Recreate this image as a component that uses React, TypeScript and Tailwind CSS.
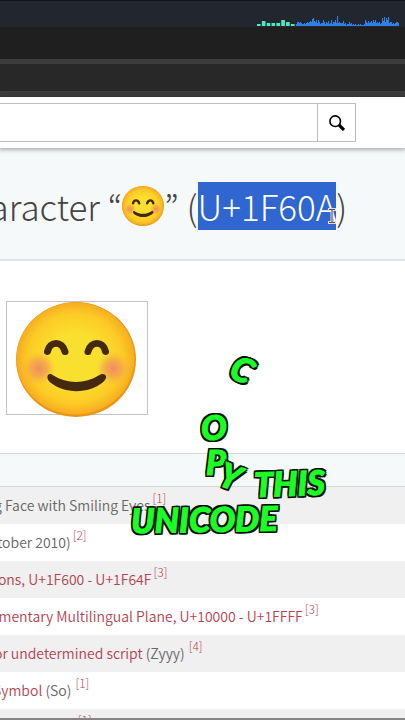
import { useId } from "react";

const levels = [
  2, 4, 4, 3, 4, 3, 2, 2, 3, 2, 3, 4, 3, 4, 5, 4, 7, 8, 5, 4, 6, 3, 6, 4, 2, 3, 3, 6, 4, 2, 4, 3, 5, 2, 3,
  6, 2, 4, 4, 6, 3, 10, 3, 4, 3, 3, 3, 5, 2, 3, 1, 2, 2, 4, 2, 3, 1, 2, 1, 2, 1, 1, 2, 1, 2, 1, 1, 1, 2, 6,
  4, 3, 5, 3, 4, 5, 3, 6, 4, 6, 3, 4, 3, 4, 2, 3, 8, 5, 9, 4, 8, 6, 9, 3, 4, 4, 2, 3, 2, 3, 4, 4, 3,
];
const beats = [2, 5, 3, 3, 3, 6, 4, 2];

function Meter() {
  return (
    <svg className="mr-1.5 h-3 w-[142px]" viewBox="0 0 142 12" aria-hidden="true">
      {beats.map((h, i) => (
        <rect key={i} x={i * 4.85} y={11 - h} width="3.6" height={h} fill="#4cebc4" />
      ))}
      {levels.map((h, i) => (
        <rect key={i} x={39 + i} y={11 - h} width="1.1" height={h} fill="#2f7fe6" />
      ))}
    </svg>
  );
}

function Face({ className }: { className: string }) {
  const id = useId();
  return (
    <svg className={className} viewBox="0 0 120 116" preserveAspectRatio="none" role="img" aria-label="Smiling face with smiling eyes">
      <defs>
        <radialGradient id={id + "f"} cx="0.5" cy="0.5" r="0.5">
          <stop offset="0.45" stopColor="#fae02e" />
          <stop offset="0.8" stopColor="#fccb26" />
          <stop offset="1" stopColor="#f6ad20" />
        </radialGradient>
        <radialGradient id={id + "c"}>
          <stop offset="0" stopColor="#f08b62" />
          <stop offset="0.5" stopColor="#f39b56" stopOpacity="0.7" />
          <stop offset="1" stopColor="#f8b53c" stopOpacity="0" />
        </radialGradient>
      </defs>
      <ellipse cx="60" cy="58" rx="60" ry="58" fill="#ee9414" />
      <ellipse cx="59.5" cy="57" rx="59" ry="56.5" fill={`url(#${id}f)`} />
      <circle cx="23" cy="67" r="17" fill={`url(#${id}c)`} />
      <circle cx="97" cy="67" r="17" fill={`url(#${id}c)`} />
      <g fill="none" stroke="#44290f" strokeLinecap="round" strokeLinejoin="round">
        <path d="M31.500 50 C34 39 46 39 49 50" strokeWidth="7" />
        <path d="M72 50 C75 39 87 39 89.500 50" strokeWidth="7" />
      </g>
      <path
        d="M31.500 75 C32 72 35 72 37 74 C51 83 69 83 83 74 C86 72 89 72 90 75 C90.500 77 89 79 87 81 C72 93 49 93 34 81 C32 79 31 77 31.500 75Z"
        fill="#44290f"
      />
    </svg>
  );
}

function Ref({ n, spaced }: { n: number; spaced?: boolean }) {
  return (
    <sup className={`relative -top-2 align-baseline text-xs font-light text-[#b5434f] ${spaced ? "ml-1" : "ml-0.5"}`}>
      <a href="#sources">[{n}]</a>
    </sup>
  );
}

const rows = [
  { text: "Smiling Face with Smiling Eyes", n: 1 },
  { text: "6.0 (October 2010)", n: 2 },
  { link: "Emoticons, U+1F600 - U+1F64F", n: 3 },
  { link: "Supplementary Multilingual Plane, U+10000 - U+1FFFF", n: 3 },
  { link: "Code for undetermined script", text: " (Zyyy)", n: 4, spaced: true },
  { link: "Other Symbol", text: " (So)", n: 1, spaced: true },
  { link: "Other Neutral", text: " (ON)", n: 1, spaced: true },
];

const glyph =
  "absolute leading-none text-[#1bff27] [-webkit-text-stroke:1px_#1bff27] [text-shadow:2px_0_#061006,-2px_0_#061006,0_2px_#061006,0_-2px_#061006,2px_2px_#061006,-2px_2px_#061006,2px_-2px_#061006,-2px_-2px_#061006]";

export default function App() {
  return (
    <div className="relative h-screen overflow-hidden bg-white font-['Noto_Sans_CJK_KR','Noto_Sans',sans-serif] font-light">
      <header>
        <div className="flex h-[27px] items-end justify-end border-t border-[#11141a] bg-[#22262e]">
          <Meter />
        </div>
        <div className="h-8 bg-[#1f1f1f]" />
        <div className="h-[38px] border-t-[5px] border-b-[6px] border-[#3c3c3c] bg-[#282828]" />
      </header>

      <form
        className="relative flex h-[51px] items-center bg-white pr-[49px] shadow-[0_1px_4px_1px_rgba(0,0,0,0.3)]"
        onSubmit={(e) => e.preventDefault()}
      >
        <input
          aria-label="Search"
          className="h-[39px] min-w-0 flex-1 border-y border-[#bdbdbd] bg-white px-3 outline-none"
        />
        <button aria-label="Submit search" className="flex size-[39px] items-center justify-center border border-[#bdbdbd]">
          <svg className="size-4" viewBox="0 0 16 16" fill="none" stroke="#000">
            <circle cx="6.200" cy="6.200" r="5.300" strokeWidth="1.600" />
            <path d="M10.200 10.200 L15 15" strokeWidth="3.200" />
          </svg>
        </button>
      </form>

      <section className="flex h-[113px] items-center border-b-2 border-[#e1e3e4] bg-[#f6f9fa] pt-1">
        <h1 className="-ml-[31px] flex items-center text-[35px] leading-[48px] whitespace-pre text-[#444]">
          {"haracter “"}
          <Face className="h-10 w-[42px]" />
          {"” ("}
          <mark className="bg-[#2f66d0] text-white">U+1F60A</mark>)
        </h1>
      </section>

      <section className="h-[192px] pt-10 pl-1.5">
        <div className="flex h-[114px] w-[142px] justify-center border border-[#c4c4c4]">
          <Face className="-ml-0.5 h-[115px] w-[120px] shrink-0" />
        </div>
      </section>

      <div className="h-[34px] border-y border-[#d3d8da] bg-[#f6f9fa]" />
      <table className="w-full border-collapse text-sm leading-5 font-[350] text-[#666]">
        <tbody>
          {rows.map((r, i) => (
            <tr key={i} className="h-[37px] odd:bg-[#f0f0f0]">
              <td className="p-0 pb-0.5 whitespace-nowrap">
                <div className="-ml-[47px] h-5">
                  {r.link && (
                    <a href="#block" className="text-[#b5434f]">
                      {r.link}
                    </a>
                  )}
                  {r.text}
                  <Ref n={r.n} spaced={r.spaced} />
                </div>
              </td>
            </tr>
          ))}
        </tbody>
      </table>

      <svg className="absolute top-[208px] left-[326px] h-4 w-3" viewBox="0 0 12 16" fill="none" aria-hidden="true">
        <path d="M2 1.500H10M2 14.500H10M6 2V14" stroke="#ddd" strokeWidth="3" />
        <path d="M3 1.500H9M3 14.500H9M6 2V14" stroke="#555" strokeWidth="1" />
      </svg>

      <div className="font-['Lato',sans-serif] text-[34px] font-black italic">
        <span className={`${glyph} top-[352px] left-[232px] rotate-[25deg]`}>C</span>
        <span className={`${glyph} top-[410px] left-[201px]`}>O</span>
        <span className={`${glyph} top-[445px] left-[206px]`}>P</span>
        <span className={`${glyph} top-[459px] left-[220px] rotate-[20deg]`}>Y</span>
        <span className={`${glyph} top-[466px] left-[254px] -rotate-2`}>THIS</span>
        <span className={`${glyph} top-[502px] left-[131px] -rotate-1`}>UNICODE</span>
      </div>
      <div className="absolute inset-x-0 bottom-0 h-0.5 bg-[#858585]" />
    </div>
  );
}
